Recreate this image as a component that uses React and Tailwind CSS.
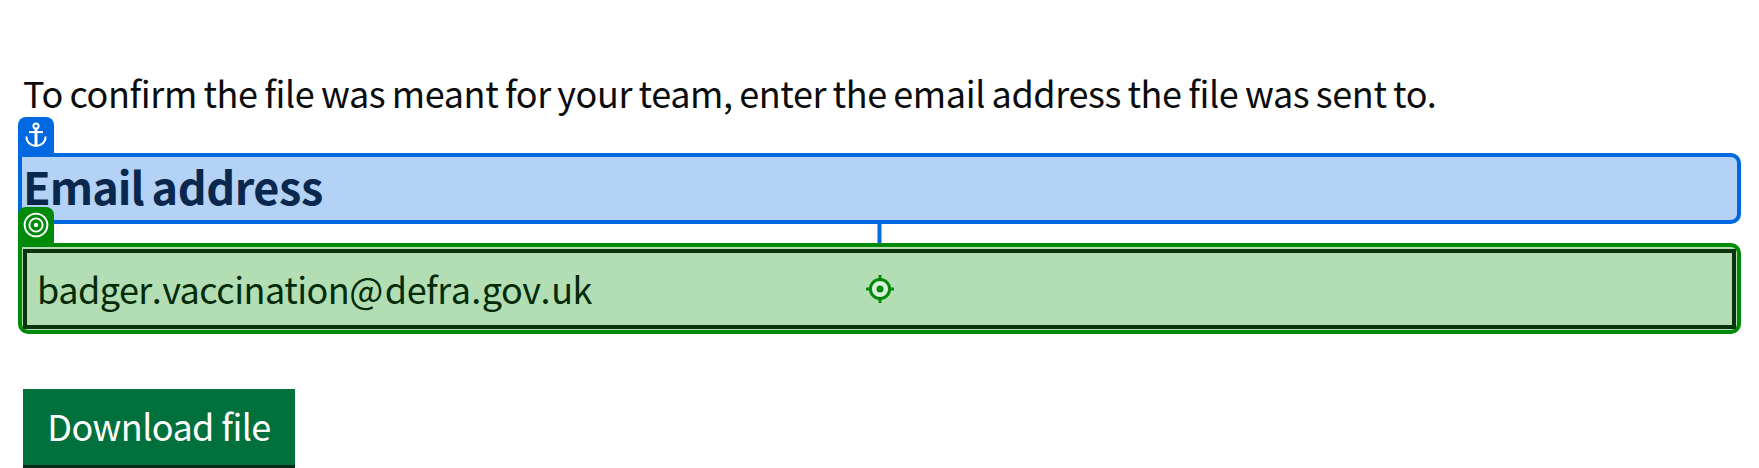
function AnchorIcon() {
  return (
    <svg width="22" height="26" viewBox="0 0 22 26" fill="none" stroke="#fff" strokeWidth="2" className="block">
      <circle cx="11" cy="4" r="2.6" />
      <path d="M11 7v17" strokeWidth="3" />
      <path d="M4 10.1h14" />
      <path d="M1.4 14.5c0 5.500 4.200 9.500 9.600 9.500s9.600-4 9.600-9.500" />
    </svg>
  );
}

function TargetIcon() {
  return (
    <svg width="26" height="26" viewBox="0 0 26 26" fill="none" stroke="#fff" strokeWidth="1.900" className="block">
      <circle cx="13" cy="13" r="11.400" />
      <circle cx="13" cy="13" r="6.600" />
      <circle cx="13" cy="13" r="2.200" fill="#fff" stroke="none" />
    </svg>
  );
}

function Crosshair() {
  return (
    <svg width="28" height="28" viewBox="0 0 28 28" fill="none" stroke="#008a09" strokeWidth="3" className="block">
      <circle cx="14" cy="14" r="9.600" fill="#daefdb" />
      <path d="M14 0v5M14 23v5M0 14h5M23 14h5" />
      <circle cx="14" cy="14" r="3.500" fill="#008a09" stroke="none" />
    </svg>
  );
}

export default function App() {
  return (
    <main className="flex h-[468px] flex-col items-start overflow-hidden bg-white pl-[18px] font-['Noto_Sans_CJK_SC','Noto_Sans',sans-serif] whitespace-nowrap text-[#0b0c0c]">
      <p className="mt-[66px] h-[87px] pl-[5px] text-[36px] leading-[52px] tracking-[-0.4px] [word-spacing:-1.1px]">
        To confirm the file was meant for your team, enter the email address the file was sent to.
      </p>

      <label
        htmlFor="email"
        className="relative h-[71px] w-[1723px] rounded-[10px] rounded-tl-none border-4 border-[#0068e1] bg-[#b3d2f5] pl-px text-[45px] leading-[58px] font-bold tracking-[-0.45px] text-[#0a284d] [word-spacing:-2px]"
      >
        <span className="absolute -top-10 -left-1 flex h-9 w-9 justify-center rounded-t-[8px] bg-[#0068e1] pt-[5px]">
          <AnchorIcon />
        </span>
        <span className="tracking-[-0.95px]">Email</span> address
      </label>

      <div className="flex h-[19px] w-[1723px] justify-center">
        <span className="w-[5px] border-x border-[#80b3f0] bg-[#0068e1]" />
      </div>

      <div className="relative h-[91px] w-[1723px] rounded-[10px] rounded-tl-none border-4 border-[#008a09] bg-[#b3deb4] pt-[2px] pl-px">
        <span className="absolute -top-10 -left-1 flex h-9 w-9 justify-center rounded-t-[8px] bg-[#008a09] pt-[5px]">
          <TargetIcon />
        </span>
        <div id="email" className="h-[80px] w-[1713px] border-4 border-[#0b330d] pl-[10px] text-[36px] leading-[70px] tracking-[-0.53px] text-[#032b08]">
          badger<span className="tracking-[0.4px]">.</span>vaccination<span className="tracking-[1.5px]">@</span>defr<span className="tracking-[0.4px]">a.</span>go<span className="tracking-[0.8px]">v.</span>uk
        </div>
        <span className="absolute top-[28px] left-[844px]">
          <Crosshair />
        </span>
      </div>

      <button className="mt-[55px] ml-[5px] flex h-[79px] w-[272px] shrink-0 justify-center border-b-[3px] border-[#002d18] bg-[#00703c] pt-[10px] text-[36px] leading-[52px] tracking-[-0.6px] text-white">
        Download file
      </button>
    </main>
  );
}
